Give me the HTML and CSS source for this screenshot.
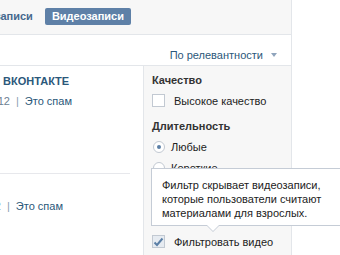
FILE: index.html
```html
<!DOCTYPE html>
<html lang="ru">
<head>
    <meta charset="UTF-8">
    <title>Видеозаписи</title>
    <link rel="stylesheet" href="styles.css">
</head>
<body>
    <div class="page">
        <div class="tabs">
            <div class="tabs-inner">
                <span class="tab">Мои видеозаписи</span>
                <span class="tab active">Видеозаписи</span>
            </div>
        </div>

        <div class="sort-row">
            <span class="sort">По релевантности <span class="caret"></span></span>
        </div>

        <div class="main">
            <div class="results">
                <div class="video">
                    <div class="video-title">ВКОНТАКТЕ</div>
                    <div class="video-meta meta-first"><span class="date">14 сентября 2012</span><span class="sep">|</span><a href="#">Это спам</a></div>
                </div>
                <div class="video second">
                    <div class="video-meta meta-second"><span class="date">3 марта 2012</span><span class="sep">|</span><a href="#">Это спам</a></div>
                </div>
            </div>

            <div class="filters">
                <div class="filter-title">Качество</div>
                <label class="option"><span class="checkbox"></span>Высокое качество</label>

                <div class="filter-title">Длительность</div>
                <label class="option radio-option"><span class="radio on"></span>Любые</label>
                <label class="option radio-option"><span class="radio"></span>Короткие</label>
                <label class="option radio-option"><span class="radio"></span>Длинные</label>

                <label class="option safe"><span class="checkbox checked">
                    <svg width="11" height="10" viewBox="0 0 11 10"><path d="M1.5 5.5 L4 8 L9.5 1.5" fill="none" stroke="#5b7fa6" stroke-width="2"/></svg>
                </span>Фильтровать видео</label>

                <div class="tooltip">
                    Фильтр скрывает видеозаписи,<br>
                    которые пользователи считают<br>
                    материалами для взрослых.
                </div>
            </div>
        </div>
    </div>
</body>
</html>
```

FILE: styles.css
```css
body {
    margin: 0;
    font-family: "Liberation Sans", Arial, sans-serif;
    font-size: 11px;
    color: #222;
    background: #fff;
    overflow: hidden;
}

.page {
    width: 291px;
    border-right: 1px solid #e3e6ea;
    min-height: 255px;
}

.tabs {
    height: 34px;
    background: #f7f7f7;
    border-bottom: 1px solid #e3e6ea;
    display: flex;
    align-items: center;
}

.tabs-inner {
    width: 131px;
    display: flex;
    align-items: center;
    justify-content: flex-end;
    gap: 12px;
    white-space: nowrap;
    margin-bottom: 2px;
}

.tab {
    font-weight: bold;
    color: #45688e;
}

.tab.active {
    background: #5e80a7;
    color: #fff;
    padding: 2px 7px;
    border-radius: 2px;
    line-height: 13px;
}

.sort-row {
    height: 30px;
    border-bottom: 1px solid #e3e6ea;
    display: flex;
    align-items: flex-end;
    justify-content: flex-end;
    padding-right: 14px;
}

.sort {
    color: #2b587a;
    margin-bottom: 4px;
}

.caret {
    display: inline-block;
    border-left: 3px solid transparent;
    border-right: 3px solid transparent;
    border-top: 4px solid #8fa4bc;
    margin-left: 5px;
    vertical-align: 2px;
}

.main {
    display: flex;
    height: 190px;
}

.results {
    width: 143px;
}

.video-title {
    margin: 9px 0 0 3px;
    font-weight: bold;
    color: #2b587a;
}

.video-meta {
    display: flex;
    justify-content: flex-end;
    white-space: nowrap;
    color: #6d7f93;
}

.meta-first {
    width: 72px;
    margin-top: 8px;
}

.meta-second {
    width: 63px;
}

.sep {
    margin: 0 6px;
    color: #8a9bb0;
}

.video-meta a {
    color: #2b587a;
    text-decoration: none;
}

.second {
    border-top: 1px solid #e7e8ec;
    width: 130px;
    margin-top: 66px;
    padding-top: 26px;
}

.filters {
    position: relative;
    flex: 1;
    background: #f7f7f7;
    border-left: 1px solid #e3e6ea;
    padding: 8px 0 0 8px;
}

.filter-title {
    font-weight: bold;
    color: #333;
    margin-bottom: 8px;
}

.option {
    display: flex;
    align-items: center;
    height: 13px;
    margin-bottom: 13px;
    color: #222;
}

.checkbox {
    width: 11px;
    height: 11px;
    border: 1px solid #c2c9d2;
    background: #fff;
    margin-right: 9px;
    display: flex;
    align-items: center;
    justify-content: center;
}

.checkbox.checked {
    background: #e6ebf1;
}

.radio-option {
    margin-bottom: 8px;
}

.radio {
    width: 10px;
    height: 10px;
    border: 1px solid #c2c9d2;
    border-radius: 50%;
    background: #fff;
    margin: 0 6px 0 1px;
    display: flex;
    align-items: center;
    justify-content: center;
}

.radio.on::after {
    content: "";
    width: 4px;
    height: 4px;
    border-radius: 50%;
    background: #5b7fa6;
}

.safe {
    margin-top: 40px;
}

.tooltip {
    position: absolute;
    left: 7px;
    top: 102px;
    width: 210px;
    padding: 9px 10px 5px;
    background: #fff;
    border: 1px solid #c5ccd6;
    line-height: 14px;
    color: #222;
    white-space: nowrap;
}

.tooltip::before,
.tooltip::after {
    content: "";
    position: absolute;
    left: 54px;
    border-left: 7px solid transparent;
    border-right: 7px solid transparent;
}

.tooltip::before {
    bottom: -7px;
    border-top: 7px solid #c5ccd6;
}

.tooltip::after {
    bottom: -6px;
    border-top: 7px solid #fff;
}
```
